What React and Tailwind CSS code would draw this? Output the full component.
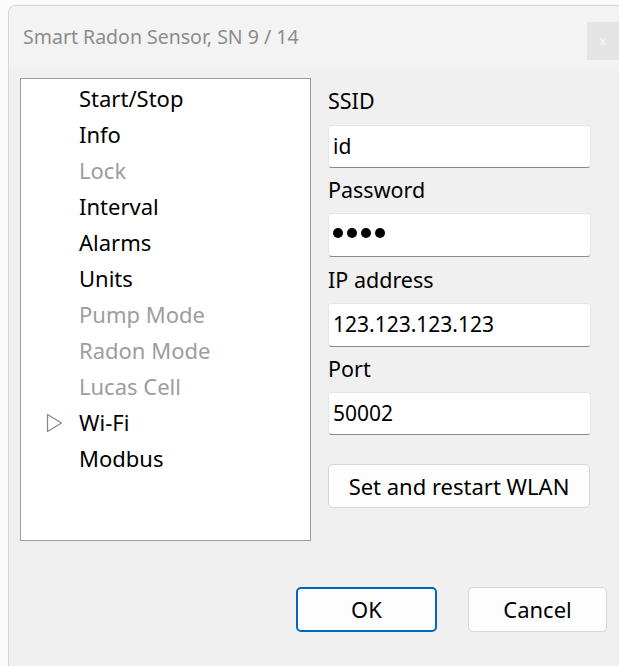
import React from "react";

const FONT = { fontFamily: '"Noto Sans", "Open Sans", sans-serif' };

const pages = [
  { name: "Start/Stop", enabled: true },
  { name: "Info", enabled: true },
  { name: "Lock", enabled: false },
  { name: "Interval", enabled: true },
  { name: "Alarms", enabled: true },
  { name: "Units", enabled: true },
  { name: "Pump Mode", enabled: false },
  { name: "Radon Mode", enabled: false },
  { name: "Lucas Cell", enabled: false },
  { name: "Wi-Fi", enabled: true, current: true },
  { name: "Modbus", enabled: true },
];

function Pointer() {
  return (
    <svg width="17" height="20" viewBox="0 0 17 20" className="block">
      <path d="M1.5 1.5 L15.5 10 L1.5 18.5 Z" fill="none" stroke="#8a8a8a" strokeWidth="1.3" strokeLinejoin="round" />
    </svg>
  );
}

function MaskedDots({ count }) {
  return (
    <div className="flex gap-[4px] -mt-[4px]">
      {Array.from({ length: count }).map((_, i) => (
        <div key={i} className="w-[10px] h-[10px] rounded-full bg-black" />
      ))}
    </div>
  );
}

function Field({ label, value, labelH, inputH }) {
  return (
    <>
      <div className="flex items-center text-[21.5px] text-black" style={{ height: labelH }}>
        {label}
      </div>
      <div
        className="flex items-center bg-white border border-[#e6e6e6] border-b-[#8a8a8a] rounded-[4px] pl-[4px] text-[21px] text-black"
        style={{ height: inputH }}
      >
        {value}
      </div>
    </>
  );
}

export default function App() {
  return (
    <div className="w-[619px] h-[666px] bg-[#fbfbfb] overflow-hidden" style={FONT}>
      <div className="ml-[8px] mt-[5px] w-[611px] h-[661px] rounded-tl-[8px] border-l border-t border-[#d4d4d4] bg-[#f0f0f0] overflow-hidden flex flex-col">
        {/* title bar */}
        <div className="h-[62px] bg-[#f3f3f3] flex items-start justify-between">
          <div className="pl-[14px] pt-[17px] text-[19.5px] leading-[28px] text-[#8c8c8c]">
            Smart Radon Sensor, SN 9 / 14
          </div>
          <div className="mt-[16px] w-[32px] h-[38px] bg-[#e4e4e4] flex items-center justify-center text-[13px] text-[#f6f6f6]">
            x
          </div>
        </div>

        {/* body */}
        <div className="flex pl-[11px] pt-[10px]">
          <div className="w-[291px] h-[463px] bg-white border border-[#9c9c9c] pt-[1px]">
            {pages.map((p) => (
              <div key={p.name} className="h-[36.1px] flex items-center">
                <div className="w-[58px] flex justify-end pr-[16px]">
                  {p.current ? <Pointer /> : null}
                </div>
                <span className={"text-[22px] " + (p.enabled ? "text-black" : "text-[#9d9d9d]")}>
                  {p.name}
                </span>
              </div>
            ))}
          </div>

          <div className="ml-[17px] w-[263px] flex flex-col">
            <Field label="SSID" value="id" labelH={47} inputH={43} />
            <Field label="Password" value={<MaskedDots count={4} />} labelH={45} inputH={44} />
            <Field label="IP address" value="123.123.123.123" labelH={46} inputH={44} />
            <Field label="Port" value="50002" labelH={45} inputH={43} />
            <button className="mt-[29px] h-[44px] w-[262px] bg-[#fdfdfd] border border-[#d6d6d6] rounded-[5px] text-[22px] text-black">
              Set and restart WLAN
            </button>
          </div>
        </div>

        {/* dialog buttons */}
        <div className="flex pl-[287px] mt-[46px] gap-[31px]">
          <button className="w-[141px] h-[45px] bg-[#fdfdfd] border-2 border-[#0067c0] rounded-[5px] text-[22px] text-black">
            OK
          </button>
          <button className="w-[139px] h-[45px] bg-[#fdfdfd] border border-[#d6d6d6] rounded-[5px] text-[22px] text-black">
            Cancel
          </button>
        </div>
      </div>
    </div>
  );
}
